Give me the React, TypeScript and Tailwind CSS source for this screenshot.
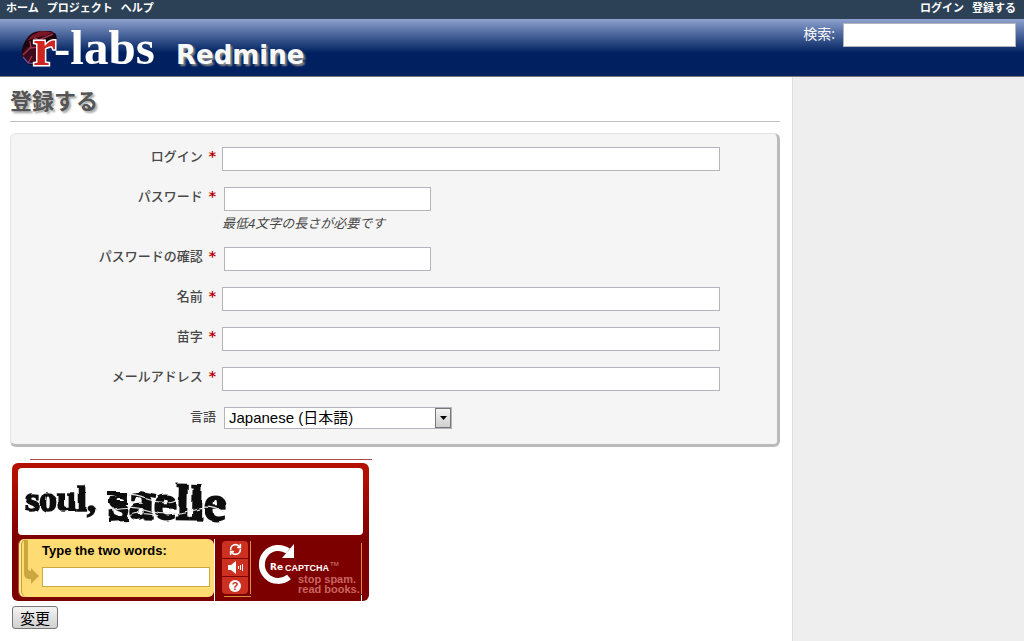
import React from "react";
import { LuRefreshCw } from "react-icons/lu";

type FieldProps = {
  id: string;
  label: string;
  type?: string;
  short?: boolean;
  hint?: string;
};

const inputBox = "block h-6 border border-[#b4b4bc] bg-white px-1 text-sm text-black outline-none";
const labelBox = "mr-1.5 w-[205px] shrink-0 whitespace-nowrap text-right text-[13px] leading-[18px] font-medium text-[#484848]";

function Field({ id, label, type = "text", short = false, hint }: FieldProps) {
  return (
    <div className={hint ? "mb-3 flex" : "mb-4 flex"}>
      <label htmlFor={id} className={labelBox}>
        {label}
        <span className="ml-1.5 inline-block font-['DejaVu_Sans',sans-serif] text-sm leading-[18px] font-bold text-[#bb0000]">*</span>
      </label>
      <div className="grow">
        <input id={id} type={type} className={short ? `${inputBox} ml-0.5 w-[207px]` : `${inputBox} w-[91%]`} />
        {hint && <em className="block text-[13px] leading-6 text-[#484848]">{hint}</em>}
      </div>
    </div>
  );
}

function Logo() {
  return (
    <svg width="142" height="57" viewBox="0 0 142 57" role="img" aria-label="r-labs">
      <path d="M2 38C1 31 3 24 8 18c3-4 8-6 14-6h9l5 3 1 6-8 8-9 12-4 6-9-2z" fill="#1d050f" />
      <path d="M2 34l5-6 8-3 5 8-4 13-9-2-5-6z" fill="#3a0b1c" />
      <path d="M7 22l5-6 9-4 12 1-8 4-11 2z" fill="#7c1526" />
      <path d="M3 36l7-7 9-1M8 44l4-7M14 19l5 2 14-6M10 22l1 7" stroke="#a3334b" strokeWidth="1.4" fill="none" />
      <path d="M3 38l5 6 8 1" stroke="#5d55b5" strokeWidth="1.2" fill="none" />
      <text x="13" y="46" fontSize="52" className="font-['Liberation_Serif',serif] font-bold" fill="#cf2420" stroke="#fff" strokeWidth="3" paintOrder="stroke">r</text>
      <text x="34" y="45" fontSize="49" className="font-['Liberation_Serif',serif] font-bold" fill="#fff">-labs</text>
    </svg>
  );
}

function Challenge() {
  return (
    <svg width="345" height="67" viewBox="0 0 345 67" role="img" aria-label="soul, saelle" className="block">
      <defs>
        <filter id="rough" x="-5%" y="-20%" width="110%" height="140%">
          <feTurbulence type="fractalNoise" baseFrequency="0.08" numOctaves="1" seed="4" />
          <feDisplacementMap in="SourceGraphic" scale="5" />
        </filter>
      </defs>
      <g filter="url(#rough)" className="font-['Liberation_Serif',serif] font-bold">
        <text x="7" y="43" fontSize="36" fill="#111" stroke="#111" strokeWidth="1.5">soul,</text>
        <text x="91" y="50" fontSize="50" fill="#111" stroke="#111" strokeWidth="2" transform="rotate(1 91 50)">saelle</text>
        <path d="M91 29q20-5 38 2t32-1M92 42q20-6 40 1t44-2q16-5 30 3M108 49q18-8 32-1" stroke="#e5e5e5" strokeWidth="1.1" fill="none" />
        <path d="M90 26h18M91 34h18M91 52l19-1M122 25l16 3" stroke="#111" strokeWidth="4" fill="none" />
      </g>
    </svg>
  );
}

function RecaptchaLogo() {
  return (
    <svg width="104" height="60" viewBox="0 0 104 60" role="img" aria-label="reCAPTCHA: stop spam. read books." className="overflow-visible">
      <path d="M31 12A16.500 16.500 0 1 0 32 38" fill="none" stroke="#fff" strokeWidth="6" />
      <path d="M37 5v14H25z" fill="#fff" />
      <path d="M14 21h25v14H28l-5-3h-9z" fill="#850302" />
      <text x="13" y="31" fontSize="9" className="font-['DejaVu_Sans',sans-serif] font-bold" fill="#fff">Re</text>
      <text x="28" y="32" fontSize="9" className="font-['Liberation_Sans',sans-serif] font-bold" fill="#fff">CAPTCHA</text>
      <text x="73" y="27" fontSize="6" className="font-['Liberation_Sans',sans-serif]" fill="#d98c86">TM</text>
      <g fontSize="11" className="font-['Liberation_Sans',sans-serif] font-bold" fill="#c86660">
        <text x="41" y="44">stop spam.</text>
        <text x="41" y="54">read books.</text>
      </g>
    </svg>
  );
}

function Captcha() {
  const tool = "flex h-[17px] w-full items-center justify-center bg-[#cb3020] text-white";
  return (
    <section className="ml-0.5 h-[138px] w-[357px] rounded-md bg-linear-to-b from-[#b31000] from-10% to-[#7d0000] to-55% pt-[5px]">
      <div className="mx-1.5 h-[67px] rounded-sm bg-white">
        <Challenge />
      </div>
      <div className="flex pt-1">
        <div className="ml-1.5 flex h-[58px] w-[196px] rounded-md border-l border-[#b04a10] bg-[#ffdc73] shadow-[inset_2px_0_0_#ffe9a0,inset_3px_0_0_#d29c38]">
          <svg width="23" height="58" viewBox="0 0 23 58" className="shrink-0" aria-hidden="true">
            <path d="M5 1h4v28q0 3 3 3V29l8 8-8 8v-5Q5 41 5 34z" fill="#cba83f" />
          </svg>
          <div className="font-['Liberation_Sans',sans-serif]">
            <label htmlFor="words" className="mb-2 block pt-1 text-[13px] leading-4 font-bold text-black">Type the two words:</label>
            <input id="words" className="block h-5 w-[168px] border border-[#cca940] bg-white px-1 text-sm outline-none" />
          </div>
        </div>
        <div className="h-[62px] w-px bg-white" />
        <div className="ml-[7px] w-[29px]">
          <div className="mt-0.5 border-r border-[#d98f35] pr-0.5">
            <div className="flex flex-col gap-px overflow-hidden rounded">
              <button type="button" aria-label="Get a new challenge" className={tool}>
                <LuRefreshCw size={13} strokeWidth={3} />
              </button>
              <button type="button" aria-label="Get an audio challenge" className={tool}>
                <svg width="16" height="13" viewBox="0 0 16 13" fill="none" stroke="currentColor">
                  <path d="M1 4h3l5-4v13L4 9H1z" fill="currentColor" stroke="none" />
                  <path d="M11.500 5v3M13.500 4v5M15.500 3v7" />
                </svg>
              </button>
              <button type="button" aria-label="Help" className={tool}>
                <span className="h-3 w-3 rounded-full bg-white font-['Liberation_Sans',sans-serif] text-[11px] leading-3 font-bold text-[#cb3020]">?</span>
              </button>
            </div>
          </div>
          <div className="mt-0.5 ml-0.5 h-px bg-[#d98f35]" />
        </div>
        <div className="ml-1.5"><RecaptchaLogo /></div>
        <div className="flex h-[62px] w-px flex-col justify-between">
          <div className="mt-1 h-[51px] bg-[#d98f35]" />
          <div className="h-1.5 bg-white" />
        </div>
      </div>
    </section>
  );
}

export default function App() {
  return (
    <div className="flex min-h-screen flex-col bg-white font-['Noto_Sans','Noto_Sans_CJK_JP',sans-serif]">
      <nav className="flex h-[19px] justify-between bg-[#2c4056] pr-2 pl-1.5 text-[11px] leading-[15px] font-bold text-white">
        <div className="flex gap-2">
          <a href="#home">ホーム</a>
          <a href="#projects">プロジェクト</a>
          <a href="#help">ヘルプ</a>
        </div>
        <div className="flex gap-2">
          <a href="#login">ログイン</a>
          <a href="#register">登録する</a>
        </div>
      </nav>
      <header className="flex h-[58px] justify-between border-b border-[#777] bg-linear-to-b from-[#8fa2cf] to-[#00205f] to-60% pr-2 pl-5">
        <div className="flex">
          <Logo />
          <h1 className="ml-3.5 pt-4 font-['DejaVu_Sans',sans-serif] text-[26px] leading-10 font-bold text-[#f8f8f8] [text-shadow:2px_2px_2px_#888]">Redmine</h1>
        </div>
        <form className="flex pt-1">
          <label htmlFor="q" className="mr-2 text-sm leading-[22px] text-[#f8f8f8]">検索:</label>
          <input id="q" className={`${inputBox} w-[173px]`} />
        </form>
      </header>
      <div className="flex grow">
        <main className="grow pt-2.5 pr-3 pb-3 pl-2.5">
          <h2 className="mb-[11px] border-b border-[#c0c0c0] pb-2 text-[22px] leading-[26px] font-bold text-[#555] [text-shadow:2px_2px_2px_#aaa]">登録する</h2>
          <form>
            <div className="mb-3 rounded-md border border-r-[3px] border-b-[3px] border-[#e4e4e4] border-r-[#bbb] border-b-[#bbb] bg-[#f5f5f5] pt-[13px] pr-2 pb-[15px]">
              <Field id="login" label="ログイン" />
              <Field id="password" label="パスワード" type="password" short hint="最低4文字の長さが必要です" />
              <Field id="confirm" label="パスワードの確認" type="password" short />
              <Field id="firstname" label="名前" />
              <Field id="lastname" label="苗字" />
              <Field id="mail" label="メールアドレス" />
              <div className="flex">
                <label htmlFor="language" className={labelBox}>言語</label>
                <div className="relative ml-0.5">
                  <select id="language" className="block h-[22px] w-[228px] appearance-none border border-[#b4b4bc] bg-white pl-1 font-['Liberation_Sans','Noto_Sans_CJK_JP',sans-serif] text-[15px] leading-5 text-black">
                    <option>Japanese (日本語)</option>
                  </select>
                  <span className="pointer-events-none absolute top-px right-px flex h-5 w-4 items-center justify-center border border-[#777] bg-linear-to-b from-[#f4f4f4] to-[#cfcfcf]">
                    <svg width="7" height="4" viewBox="0 0 7 4"><path d="M0 0h7L3.500 4z" fill="#000" /></svg>
                  </span>
                </div>
              </div>
            </div>
            <div className="mb-[3px] ml-5 h-px w-[342px] bg-[#b04848]" />
            <Captcha />
            <button type="submit" className="mt-[5px] ml-0.5 h-[23px] w-[46px] rounded-[3px] border border-[#777] bg-linear-to-b from-[#f4f4f4] to-[#d0d0d0] text-[15px] leading-5 text-black">変更</button>
          </form>
        </main>
        <aside className="w-[232px] shrink-0 border-l border-[#ddd] bg-[#eee]" />
      </div>
    </div>
  );
}
